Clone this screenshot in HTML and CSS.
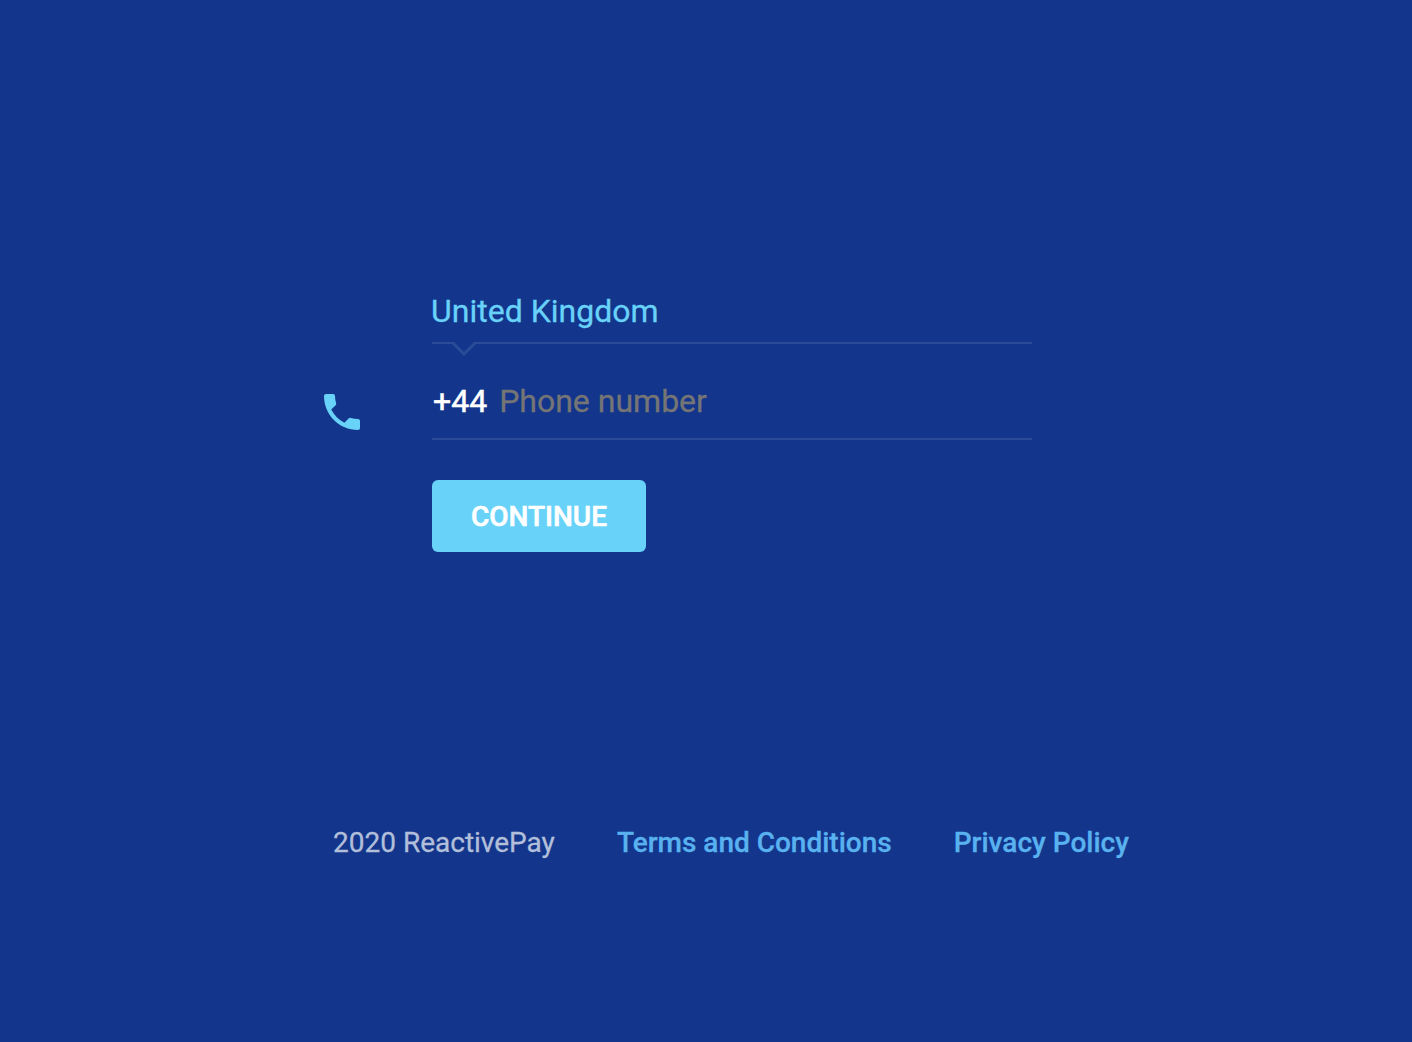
FILE: index.html
```html
<!DOCTYPE html>
<html lang="en">
<head>
<meta charset="utf-8">
<title>ReactivePay</title>
<link rel="stylesheet" href="styles.css">
</head>
<body>
<main class="form">
  <div class="country">United Kingdom</div>
  <svg class="divider" viewBox="0 0 600 16" width="600" height="16"><path d="M0 3H21"/><path class="notch" d="M20.5 2.5L32 14L43.5 2.5"/><path d="M43 3H600"/></svg>
  <div class="phone-row">
    <svg class="phone-icon" viewBox="3 3 18 18" width="36" height="36"><path d="M6.62 10.79c1.44 2.83 3.76 5.14 6.59 6.59l2.2-2.2c.27-.27.67-.36 1.02-.24 1.12.37 2.33.57 3.57.57.55 0 1 .45 1 1V20c0 .55-.45 1-1 1-9.39 0-17-7.61-17-17 0-.55.45-1 1-1h3.5c.55 0 1 .45 1 1 0 1.25.2 2.45.57 3.57.11.35.03.74-.25 1.02l-2.2 2.2z"/></svg>
    <div class="phone-field"><span class="code">+44</span><span class="placeholder">Phone number</span></div>
  </div>
  <button class="continue">CONTINUE</button>
</main>
<footer class="footer">
  <span class="copyright">2020 ReactivePay</span>
  <a class="link terms">Terms and Conditions</a>
  <a class="link privacy">Privacy Policy</a>
</footer>
</body>
</html>
```
FILE: styles.css
```css
* { box-sizing: border-box; }
body {
  margin: 0;
  height: 1042px;
  overflow: hidden;
  background: #13368c;
  font-family: Roboto, sans-serif;
  display: flex;
  flex-direction: column;
}
.form {
  margin: 291px 0 0 324px;
  width: 708px;
  height: 532px;
  display: flex;
  flex-direction: column;
}
.country {
  margin-left: 107px;
  height: 49px;
  line-height: 40px;
  font-size: 32px;
  color: #69d2f9;
  -webkit-text-stroke: 0.3px;
}
.divider { margin-left: 108px; fill: none; stroke: #2b4b99; stroke-width: 2; }
.notch { stroke-width: 3; }
.phone-row { display: flex; height: 84px; gap: 72px; }
.phone-icon { margin-top: 38px; fill: #69d2f9; }
.phone-field {
  width: 600px;
  padding: 25px 0 0 1px;
  display: flex;
  gap: 12px;
  font-size: 32px;
  line-height: 40px;
  border-bottom: 2px solid #2b4b99;
  -webkit-text-stroke: 0.3px;
}
.code { color: #fff; -webkit-text-stroke: 0.5px; }
.placeholder { color: #757575; }
.continue {
  margin: 40px 0 0 108px;
  width: 214px;
  height: 72px;
  padding: 2px 0 0;
  border: 0;
  border-radius: 6px;
  background: #69d2f9;
  color: #fff;
  font: 500 28px/70px Roboto, sans-serif;
  -webkit-text-stroke: 0.6px;
}
.footer {
  margin-left: 333px;
  display: flex;
  gap: 62px;
  font-size: 28px;
  line-height: 40px;
  white-space: nowrap;
  -webkit-text-stroke: 0.3px;
}
.copyright { color: #b2bfda; }
.link { color: #59b2ef; font-weight: 500; }
```
